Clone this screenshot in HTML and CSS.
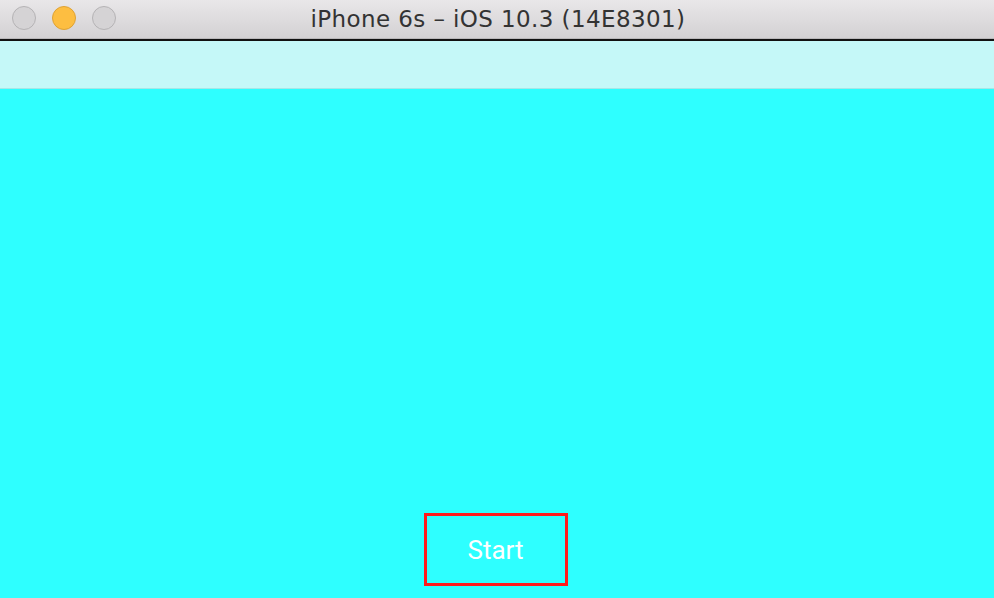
FILE: index.html
```html
<!DOCTYPE html>
<html>
<head>
<meta charset="utf-8">
<link rel="stylesheet" href="styles.css">
</head>
<body>
<div class="window">
  <div class="titlebar">
    <div class="lights">
      <span class="light gray"></span>
      <span class="light yellow"></span>
      <span class="light gray"></span>
    </div>
    <div class="title">iPhone 6s – iOS 10.3 (14E8301)</div>
  </div>
  <div class="screen">
    <div class="navbar"></div>
    <div class="content">
      <button class="start">Start</button>
    </div>
  </div>
</div>
</body>
</html>
```

FILE: styles.css
```css
html, body {
  margin: 0;
  padding: 0;
  width: 994px;
  height: 598px;
  overflow: hidden;
}
.window {
  display: flex;
  flex-direction: column;
  height: 598px;
}
.titlebar {
  height: 38px;
  background: linear-gradient(#e9e7e9, #d3d1d3);
  border-bottom: 1px solid #b9b7b9;
  display: flex;
  align-items: center;
  position: relative;
}
.lights {
  display: flex;
  gap: 16px;
  padding-left: 12px;
  position: absolute;
  left: 0;
  top: 6px;
}
.light {
  width: 22px;
  height: 22px;
  border-radius: 50%;
  border: 1px solid #b5b3b5;
  background: #d5d3d5;
  display: block;
}
.light.yellow {
  background: #fdbe41;
  border-color: #dea235;
}
.title {
  flex: 1;
  text-align: center;
  font-family: "DejaVu Sans", "Liberation Sans", sans-serif;
  font-size: 23px;
  letter-spacing: 0.4px;
  color: #333333;
  padding-left: 2px;
}
.screen {
  flex: 1;
  display: flex;
  flex-direction: column;
  border-top: 2px solid #111;
}
.navbar {
  height: 47px;
  background: #c5f8f8;
  border-bottom: 1px solid #a6e6e6;
}
.content {
  flex: 1;
  background: #2effff;
  display: flex;
  justify-content: center;
  align-items: flex-end;
}
.start {
  width: 144px;
  height: 73px;
  margin: 0 3px 12px 0;
  border: 3px solid #ff1a1a;
  background: transparent;
  color: #ffffff;
  font-family: Roboto, "Liberation Sans", sans-serif;
  font-size: 26px;
  padding: 0;
}
```
